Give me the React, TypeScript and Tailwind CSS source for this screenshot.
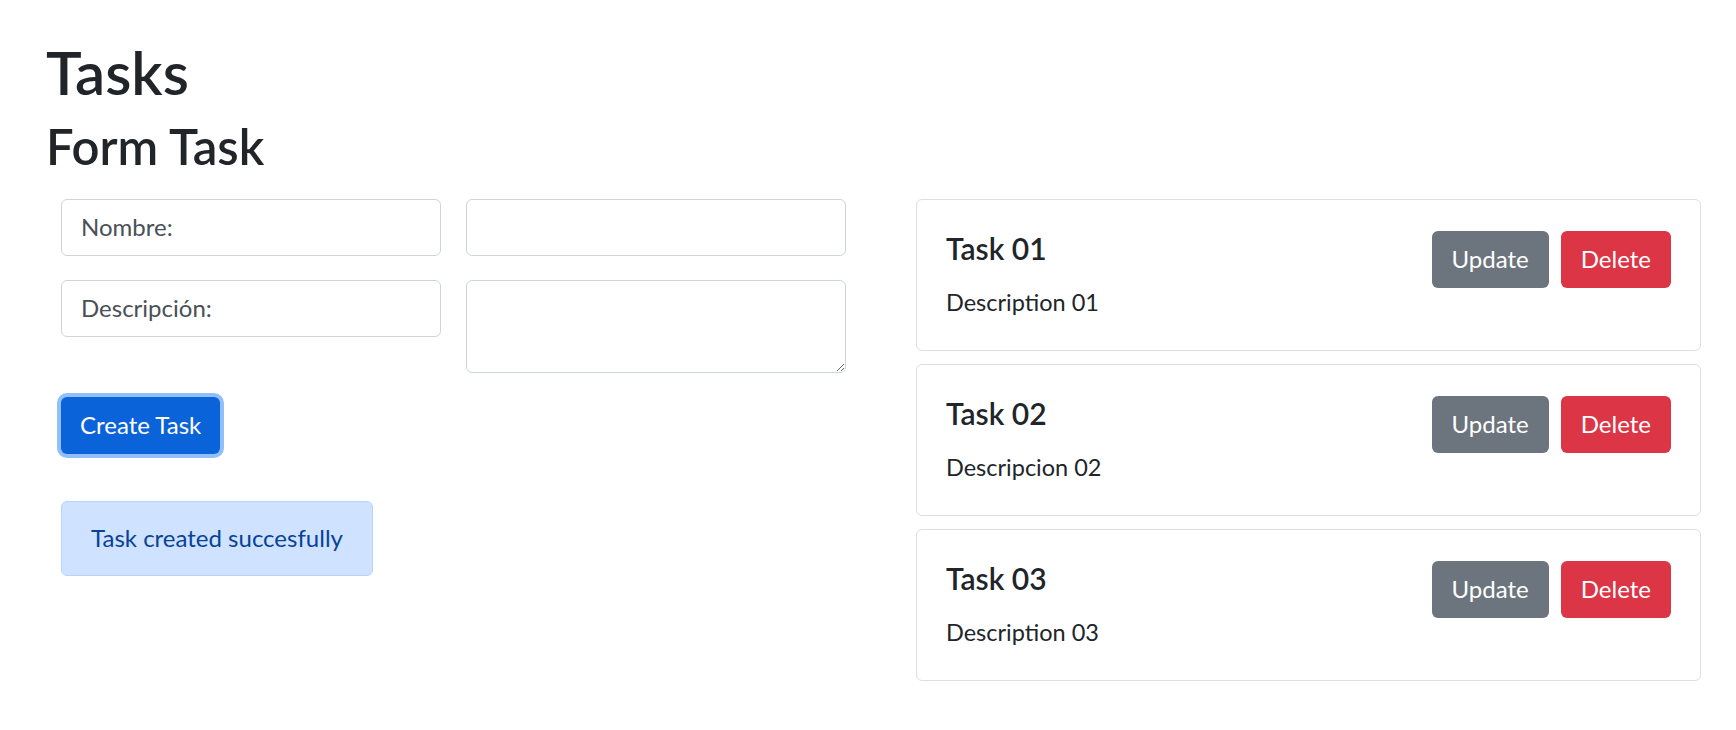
import React from "react";

const tasks = [
  { title: "Task 01", desc: "Description 01" },
  { title: "Task 02", desc: "Descripcion 02" },
  { title: "Task 03", desc: "Description 03" },
];

export default function App() {
  return (
    <div
      className="min-h-screen bg-white pl-[46px] pt-[36px] text-[#212529]"
      style={{ fontFamily: "Lato, 'Noto Sans', sans-serif" }}
    >
      <h1 className="text-[60px] font-semibold leading-[1.2]">Tasks</h1>
      <h2 className="mt-[9px] text-[49px] font-semibold leading-[1.2]">Form Task</h2>

      <div className="mt-[23px] flex">
        <div className="w-[870px] pl-[15px]">
          <div className="grid w-[785px] grid-cols-2 items-start gap-x-[25px] gap-y-[24px]">
            <div className="flex h-[57px] items-center rounded-[6px] border border-[#ced4da] px-[19px] text-[24px] text-[#495057]">
              Nombre:
            </div>
            <input
              className="h-[57px] rounded-[6px] border border-[#ced4da] px-[19px] text-[24px] outline-none"
              type="text"
            />
            <div className="flex h-[57px] items-center rounded-[6px] border border-[#ced4da] px-[19px] text-[24px] text-[#495057]">
              Descripción:
            </div>
            <textarea className="block h-[93px] resize rounded-[6px] border border-[#ced4da] px-[19px] py-[10px] text-[24px] outline-none" />
          </div>

          <button className="mt-[24px] flex h-[57px] items-center rounded-[6px] bg-[#0b63d9] px-[19px] text-[24px] text-white shadow-[0_0_0_4px_#91bffa]">
            Create Task
          </button>

          <div className="mt-[47px] flex h-[75px] w-[312px] items-center justify-center whitespace-nowrap rounded-[6px] border border-[#b6d4fe] bg-[#cfe2ff] text-[24px] text-[#084298]">
            Task created succesfully
          </div>
        </div>

        <div className="flex w-[785px] flex-col gap-[13px]">
          {tasks.map((t) => (
            <div
              key={t.title}
              className="flex justify-between rounded-[6px] border border-[#dfdfdf] pb-[33px] pl-[29px] pr-[29px] pt-[29px]"
            >
              <div className="pt-[1px]">
                <h5 className="text-[30px] font-semibold leading-[1.2]">{t.title}</h5>
                <p className="mt-[21px] text-[23.5px] leading-[30px]">{t.desc}</p>
              </div>
              <div className="mt-[2px] flex gap-[12px]">
                <button className="flex h-[57px] items-center rounded-[6px] bg-[#6c757d] px-[20px] text-[24px] text-white">
                  Update
                </button>
                <button className="flex h-[57px] items-center rounded-[6px] bg-[#dc3545] px-[20px] text-[24px] text-white">
                  Delete
                </button>
              </div>
            </div>
          ))}
        </div>
      </div>
    </div>
  );
}
